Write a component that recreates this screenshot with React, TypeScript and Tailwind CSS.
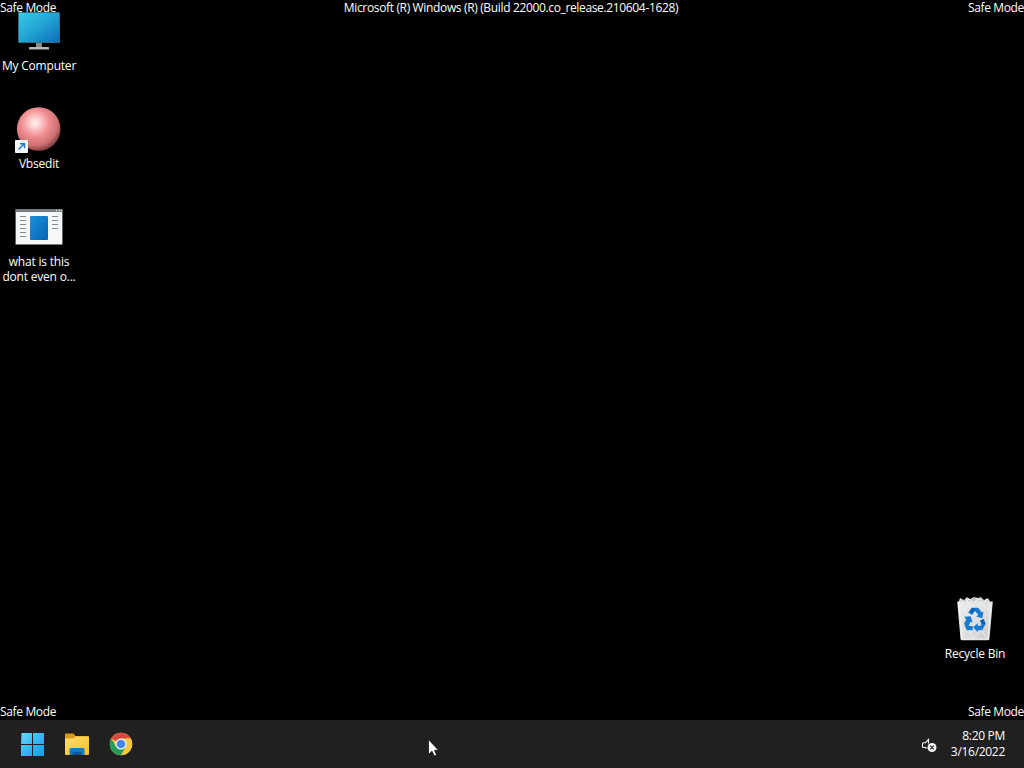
import type { ReactNode } from "react";

type DesktopItemProps = {
    label: ReactNode;
    icon: ReactNode;
    className: string;
};

const MonitorIcon = () => (
    <svg width="48" height="48" viewBox="0 0 48 48">
        <defs>
            <linearGradient id="screen" x1="0" y1="0" x2="1" y2="1">
                <stop offset="0" stopColor="#38cbe6" />
                <stop offset="0.5" stopColor="#21a3d2" />
                <stop offset="1" stopColor="#0d6fb8" />
            </linearGradient>
        </defs>
        <rect x="21" y="38" width="6" height="6" fill="#858b90" />
        <rect x="14" y="43" width="20" height="2.600" rx="0.500" fill="#b4b8bb" />
        <rect x="3" y="8" width="42" height="31" rx="1" fill="#356b80" />
        <rect x="4" y="9" width="40" height="29" fill="url(#screen)" />
    </svg>
);

const SphereIcon = () => (
    <svg width="48" height="48" viewBox="0 0 48 48">
        <defs>
            <radialGradient id="sphere" cx="0.42" cy="0.36" r="0.66">
                <stop offset="0" stopColor="#fff3f0" />
                <stop offset="0.2" stopColor="#fccaca" />
                <stop offset="0.48" stopColor="#f08d90" />
                <stop offset="0.78" stopColor="#cd7174" />
                <stop offset="1" stopColor="#7a3a3d" />
            </radialGradient>
        </defs>
        <circle cx="23.700" cy="24" r="21.800" fill="url(#sphere)" />
        <rect x="0" y="35" width="13" height="13" rx="0.800" fill="#f5f8fb" />
        <path d="M3.500 44.500 9 39M5 38.700h4.500v4.500" fill="none" stroke="#1b7cc5" strokeWidth="1.500" />
    </svg>
);

const ProgramIcon = () => (
    <svg width="48" height="48" viewBox="0 0 48 48">
        <defs>
            <linearGradient id="program" x1="0" y1="0" x2="1" y2="1">
                <stop offset="0" stopColor="#1991dd" />
                <stop offset="1" stopColor="#0864b3" />
            </linearGradient>
        </defs>
        <rect x="0.200" y="6" width="47.600" height="36" rx="1" fill="#777b7e" />
        <path d="M1 9h46v32H1z" fill="#f6f7f8" />
        <path d="M41 7.500h1M43.500 7.500h1M46 7.500h1" stroke="#fff" />
        <rect x="15" y="13" width="18" height="24" rx="1" fill="url(#program)" />
        <path
            d="M5 13.500h6M5 17.500h6M5 21.500h6M5 25.500h6M5 29.500h6M5 33.500h6M37 13.500h6M37 17.500h6M37 21.500h6M37 25.500h6"
            stroke="#858a8e"
        />
    </svg>
);

const RecycleBinIcon = () => (
    <svg width="48" height="48" viewBox="0 0 48 48">
        <defs>
            <linearGradient id="bin" x1="0" y1="0" x2="1" y2="1">
                <stop offset="0" stopColor="#ececec" />
                <stop offset="0.55" stopColor="#dedfe0" />
                <stop offset="1" stopColor="#c6c8ca" />
            </linearGradient>
        </defs>
        <path d="M7 7 9 2l4 2 3-3 3 2 4-2 4 1 3-1 3 3 4-2 2 4v2z" fill="#c5c9cb" />
        <path d="m9 3 4 4 5-4 5 4 6-4 3 4 4-4 3 4M15 2l3 5M27 2l-4 5M36 3l-4 5" fill="none" stroke="#f8f8f8" />
        <path d="M6.200 5.500h35.600l-3.300 37.500q-.1 1.300-1.500 1.300H11q-1.400 0-1.500-1.300z" fill="url(#bin)" />
        <path d="m8 7 6 7 4-8 7 7 5-7 7 8 3-6M10 37l7-7 5 13 8-9 7 10" fill="none" stroke="#f2f2f2" strokeWidth="0.800" />
        <path d="M8 7 11 43h26l3-36" fill="none" stroke="#f3f3f3" strokeWidth="1.200" />
        {/* three chasing arrows */}
        <g transform="translate(1.700 .2) scale(.91)">
            <g fill="#197ad0">
                <path d="m17 18 4-5.300h7l4 5.200 1.800-1-1.200 7.300-6.800-2 2.300-1.500-3.500-4.500-3.400 4.400z" />
                <path d="m12.500 22.500 7.300-.5 2 7-2.200-1-2 4.700H22v4.800h-6.700L12.500 30l2.400-4.500z" />
                <path d="m34 25 2.200 5.200-3.700 7.200h-5v2.300L22.500 34l5-4.500v3h3.200l1.300-2.500-2-3.200z" />
            </g>
            <path d="m18.500 17 3 2 3.500-5.300-3.500-1zM34 25l-4 2 2 3.800h4z" fill="#0864b6" />
        </g>
    </svg>
);

const DesktopItem = ({ label, icon, className }: DesktopItemProps) => (
    <div className={`absolute flex w-[78px] flex-col items-center text-center ${className}`}>
        {icon}
        <div className="whitespace-nowrap tracking-[-0.2px]">{label}</div>
    </div>
);

const StartIcon = () => (
    <svg width="24" height="24" viewBox="0 0 24 24">
        <defs>
            <linearGradient id="start" x1="0" y1="0" x2="24" y2="24" gradientUnits="userSpaceOnUse">
                <stop offset="0" stopColor="#70daff" />
                <stop offset="0.5" stopColor="#35b9f5" />
                <stop offset="1" stopColor="#169de8" />
            </linearGradient>
        </defs>
        <path d="M1.500 1H12v11H1zM13 1H23.500Q24 1 24 1.500V12H13zM1 13h11v11H1.500Q1 24 1 23.500zM13 13h11v10.500q0 .5-.5.500H13z" fill="url(#start)" />
    </svg>
);

const FolderIcon = () => (
    <svg width="26" height="24" viewBox="0 0 26 24">
        <defs>
            <linearGradient id="folder" x1="0" y1="0" x2="1" y2="1">
                <stop offset="0" stopColor="#ffdf68" />
                <stop offset="1" stopColor="#f4bd31" />
            </linearGradient>
        </defs>
        <path d="M1 2.500q0-1 1-1h7.500l2 2.500H24q1 0 1 1v5H1z" fill="#d99b16" />
        <path d="M1 6.500h8l2.500-2H24q1 0 1 1V22q0 1-1 1H2q-1 0-1-1z" fill="url(#folder)" />
        <path d="M5.500 23v-5.500Q5.500 16 7 16h12q1.500 0 1.500 1.500V23z" fill="#127ac5" />
        <path d="M8.500 23v-2q0-1 1-1h7q1 0 1 1v2z" fill="#07589b" />
    </svg>
);

const ChromeIcon = () => (
    <svg width="24" height="24" viewBox="0 0 24 24">
        <circle cx="12" cy="12" r="11.200" fill="#f5c83f" />
        <path d="M12 12 2.300 6.400A11.200 11.200 0 0 1 21.700 6.400H12z" fill="#d54a3e" />
        <path d="M2.300 6.400a11.200 11.200 0 0 0 9.700 16.800l4.850-8.400L12 12l-4.850 2.800z" fill="#259b59" />
        <path d="M21.700 6.400A11.200 11.200 0 0 1 12 23.200l4.850-8.400V6.400z" fill="#f5c83f" />
        <circle cx="12" cy="12" r="5.600" fill="#f4f4ef" />
        <circle cx="12" cy="12" r="4.300" fill="#4387ec" />
    </svg>
);

const MutedIcon = () => (
    <svg width="16" height="16" viewBox="0 0 16 16">
        <path d="M5.500 11.500 4.500 10.500H2.500Q1.500 10.500 1.500 9.500V6.700q0-1 1-1h2L7.500 2.500v4" fill="none" stroke="#f5f5f5" strokeWidth="1.100" />
        <circle cx="11" cy="10.500" r="4.500" fill="#f6f6f6" />
        <path d="m9.200 8.700 3.600 3.600M12.800 8.700l-3.600 3.600" stroke="#242424" strokeWidth="1.100" />
    </svg>
);

const Taskbar = () => (
    <div className="flex h-12 items-center justify-between bg-[#202020]">
        <div className="flex items-center pl-5">
            <StartIcon />
            <div className="ml-5 flex items-center gap-[19px]">
                <FolderIcon />
                <ChromeIcon />
            </div>
        </div>
        <div className="flex items-center gap-[14px] pr-[19px]">
            <div className="pt-0.5">
                <MutedIcon />
            </div>
            <div className="text-right leading-4 tracking-[-0.3px]">
                <div>8:20 PM</div>
                <div>3/16/2022</div>
            </div>
        </div>
    </div>
);

export default function App() {
    return (
        <div className="relative h-[768px] w-[1024px] overflow-hidden bg-black font-['Open_Sans','Noto_Sans',sans-serif] text-[12px] leading-[15px] text-white select-none">
            <div className="relative flex h-[720px] flex-col justify-between tracking-[-0.35px]">
                <div className="grid h-[15px] grid-cols-3 whitespace-nowrap">
                    <span>Safe Mode</span>
                    <span className="justify-self-center pr-0.5">Microsoft (R) Windows (R) (Build 22000.co_release.210604-1628)</span>
                    <span className="text-right">Safe Mode</span>
                </div>
                <div className="flex h-4 justify-between">
                    <span>Safe Mode</span>
                    <span>Safe Mode</span>
                </div>
                <DesktopItem className="top-1 left-0 gap-1.5" icon={<MonitorIcon />} label="My Computer" />
                <DesktopItem className="top-[105px] left-0 gap-[3px]" icon={<SphereIcon />} label="Vbsedit" />
                <DesktopItem className="top-[203px] left-0 gap-[3px]" icon={<ProgramIcon />} label={<>what is this<br />dont even o...</>} />
                <DesktopItem className="top-[596px] left-[936px] gap-0.5" icon={<RecycleBinIcon />} label="Recycle Bin" />
            </div>
            <Taskbar />
            <svg className="absolute top-[739px] left-[428px]" width="12" height="19" viewBox="0 0 12 19">
                <path d="M.5.500v15l3.500-3.300 2.300 4.800 2.300-1.100-2.100-4.600h4z" fill="#fff" stroke="#161616" strokeWidth="0.800" />
            </svg>
        </div>
    );
}
